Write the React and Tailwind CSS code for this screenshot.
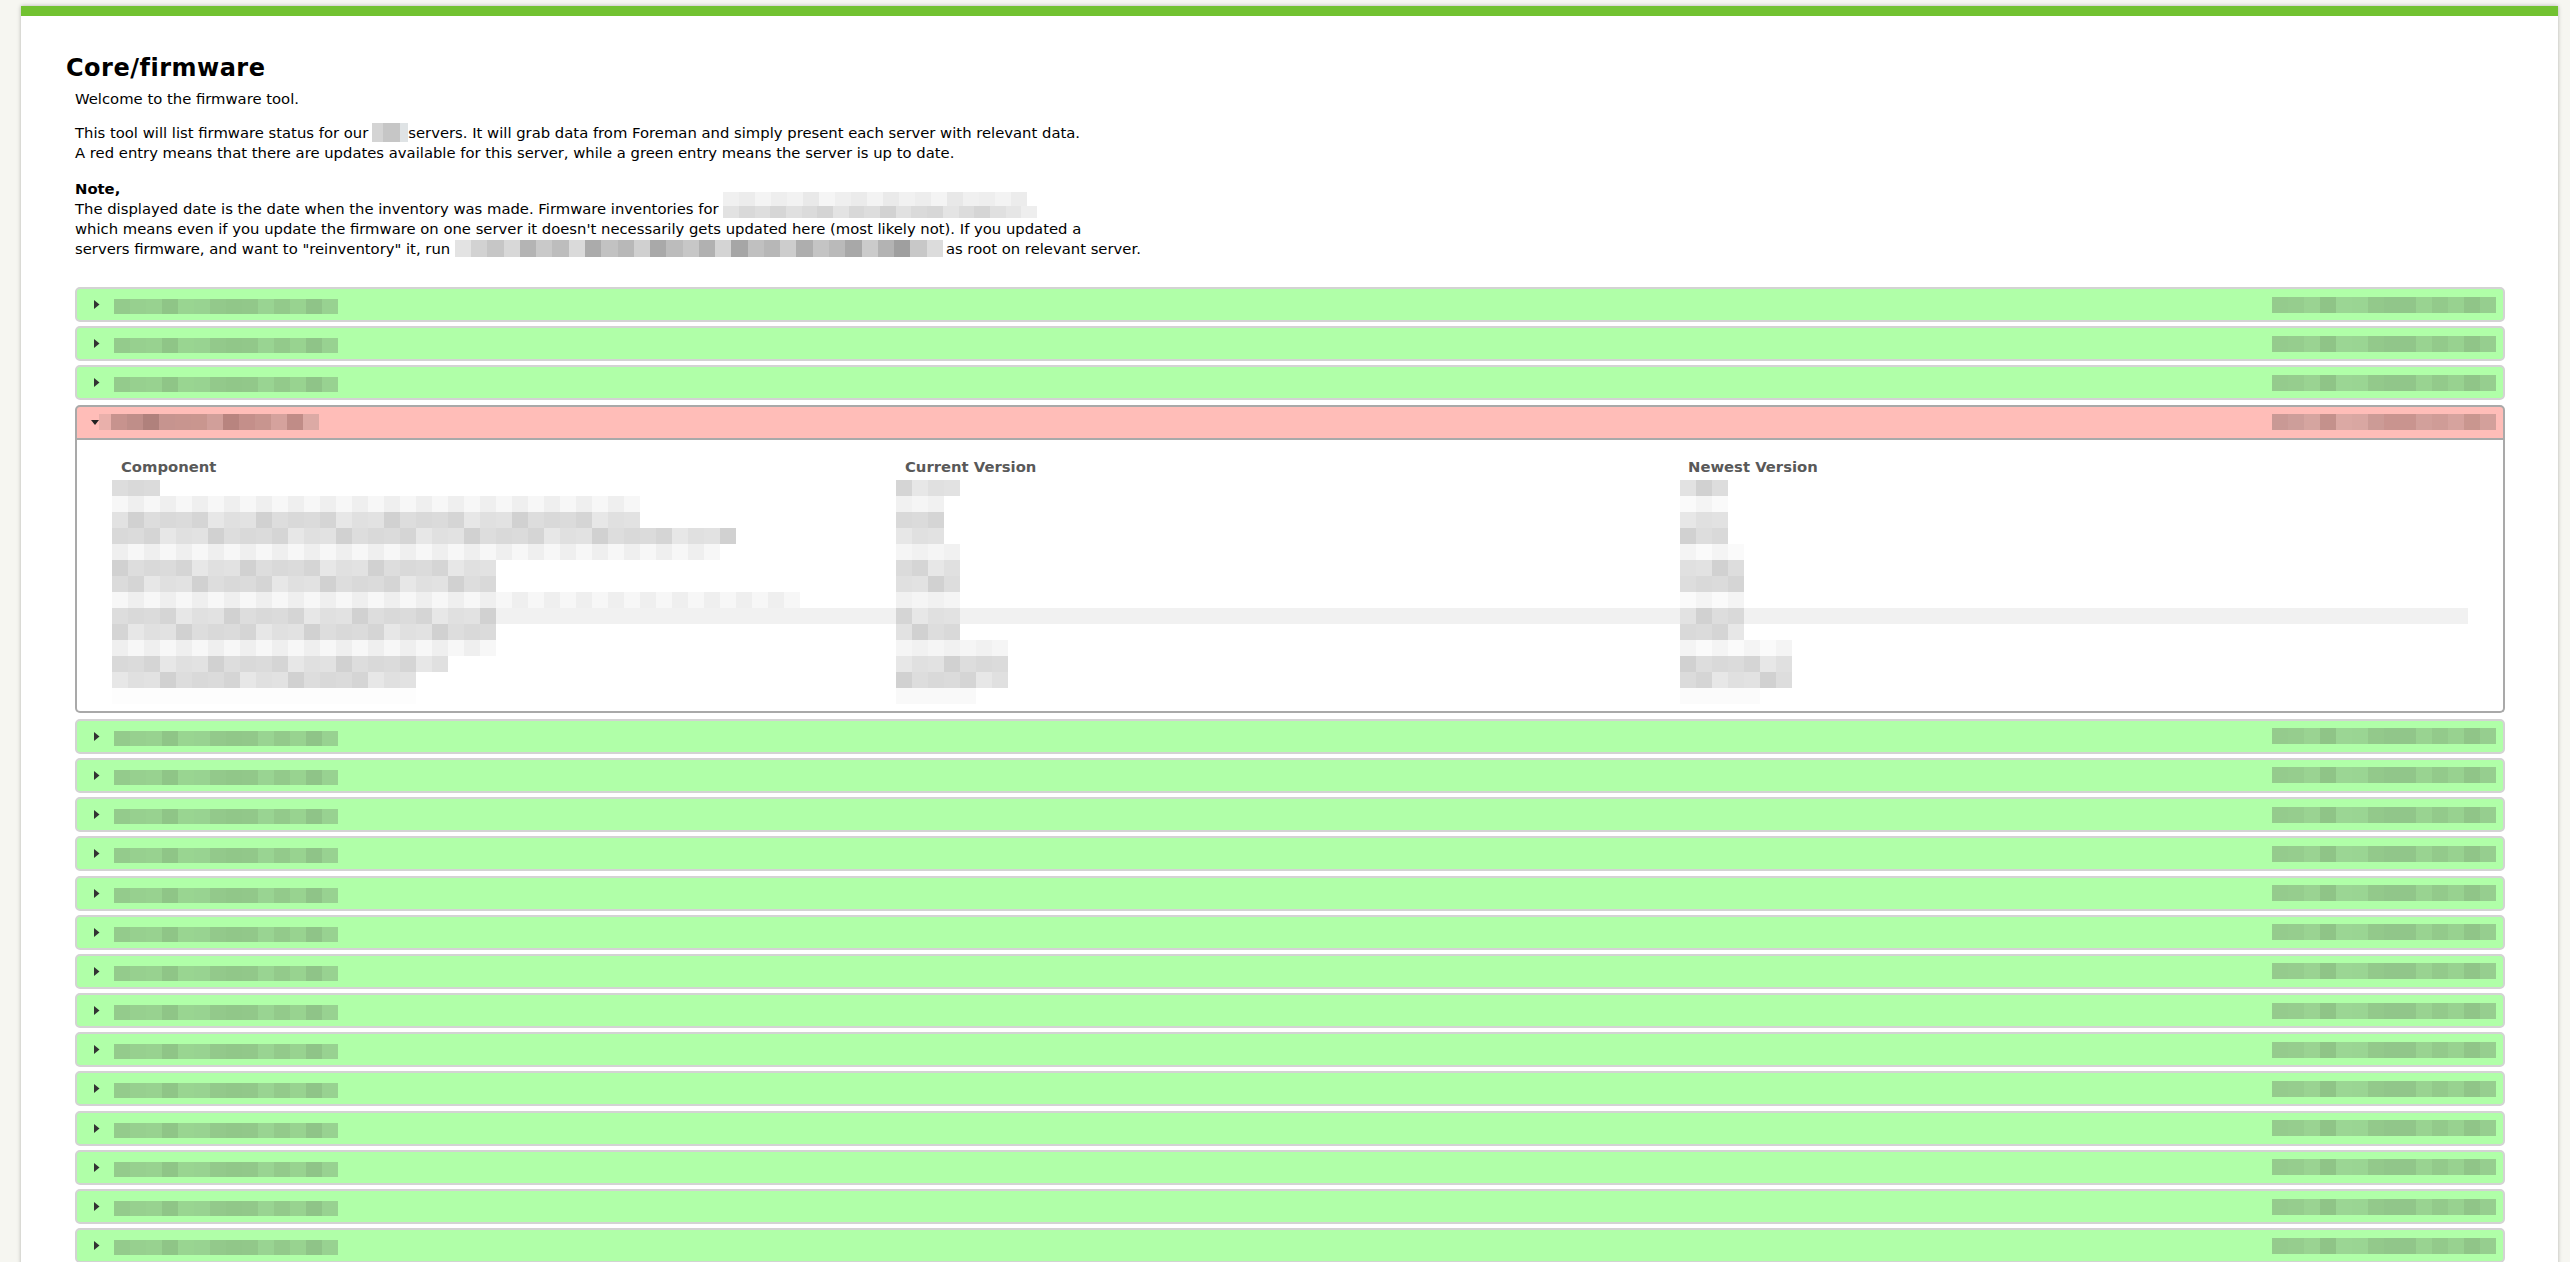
import React from 'react';

// pixelated (blurred) name / date placeholders, same for every server row
const greenName = ['bg-[#94cb8c]', 'bg-[#97d08f]', 'bg-[#98d290]', 'bg-[#8fc587]', 'bg-[#99d591]', 'bg-[#98d391]', 'bg-[#93c98b]', 'bg-[#91c789]', 'bg-[#92c88a]', 'bg-[#99d492]', 'bg-[#93ca8b]', 'bg-[#98d390]', 'bg-[#8fc488]', 'bg-[#98d291]'];
const greenDate = ['bg-[#95cb8d]', 'bg-[#96cd8e]', 'bg-[#9ad392]', 'bg-[#8fc487]', 'bg-[#9bd694]', 'bg-[#9ad593]', 'bg-[#93c98b]', 'bg-[#91c68a]', 'bg-[#91c68a]', 'bg-[#99d391]', 'bg-[#93ca8b]', 'bg-[#98d290]', 'bg-[#90c588]', 'bg-[#96ce8f]'];
const redName = ['bg-[#c7938e]', 'bg-[#bf8e89]', 'bg-[#b0817c]', 'bg-[#c6948f]', 'bg-[#c8958f]', 'bg-[#c9968f]', 'bg-[#d19f9a]', 'bg-[#b8847f]', 'bg-[#c48f8a]', 'bg-[#c8958f]', 'bg-[#d5a29d]', 'bg-[#c08c87]', 'bg-[#dcaaa5]'];
const redDate = ['bg-[#c99995]', 'bg-[#cd9e9a]', 'bg-[#d5a5a0]', 'bg-[#c4918c]', 'bg-[#dba9a4]', 'bg-[#d9a7a2]', 'bg-[#cc9b96]', 'bg-[#c9948f]', 'bg-[#c9948f]', 'bg-[#d2a09b]', 'bg-[#cf9c97]', 'bg-[#d6a39e]', 'bg-[#c9968f]', 'bg-[#d3a09b]'];

const runBlur = ['bg-[#e3e3e3]', 'bg-[#d2d2d2]', 'bg-[#c6c6c6]', 'bg-[#d8d8d8]', 'bg-[#b4b4b4]', 'bg-[#c9c9c9]', 'bg-[#bdbdbd]', 'bg-[#dadada]', 'bg-[#ababab]', 'bg-[#c2c2c2]', 'bg-[#b8b8b8]', 'bg-[#d0d0d0]', 'bg-[#a9a9a9]', 'bg-[#bcbcbc]', 'bg-[#c7c7c7]', 'bg-[#b1b1b1]', 'bg-[#d4d4d4]', 'bg-[#a6a6a6]', 'bg-[#c0c0c0]', 'bg-[#b7b7b7]', 'bg-[#cdcdcd]', 'bg-[#aeaeae]', 'bg-[#c4c4c4]', 'bg-[#bababa]', 'bg-[#a8a8a8]', 'bg-[#cbcbcb]', 'bg-[#b3b3b3]', 'bg-[#9f9f9f]', 'bg-[#c8c8c8]', 'bg-[#dcdcdc]'];
const invTop = ['bg-[#f0f0f0]', 'bg-[#ececec]', 'bg-[#f4f4f4]', 'bg-[#eeeeee]', 'bg-[#f2f2f2]', 'bg-[#e9e9e9]', 'bg-[#f5f5f5]', 'bg-[#efefef]', 'bg-[#ebebeb]', 'bg-[#f3f3f3]', 'bg-[#eaeaea]', 'bg-[#f1f1f1]', 'bg-[#ededed]', 'bg-[#f4f4f4]', 'bg-[#e8e8e8]', 'bg-[#f0f0f0]', 'bg-[#eeeeee]', 'bg-[#f3f3f3]', 'bg-[#ececec]'];
const invBottom = ['bg-[#e2e2e2]', 'bg-[#d9d9d9]', 'bg-[#dedede]', 'bg-[#d6d6d6]', 'bg-[#e0e0e0]', 'bg-[#dbdbdb]', 'bg-[#d4d4d4]', 'bg-[#e3e3e3]', 'bg-[#d8d8d8]', 'bg-[#dddddd]', 'bg-[#d2d2d2]', 'bg-[#e1e1e1]', 'bg-[#dadada]', 'bg-[#d7d7d7]', 'bg-[#e4e4e4]', 'bg-[#dcdcdc]', 'bg-[#d5d5d5]', 'bg-[#e0e0e0]', 'bg-[#e6e6e6]', 'bg-[#eeeeee]'];

const tones = {
  L: ['bg-[#f4f4f4]', 'bg-[#f7f7f7]', 'bg-[#f1f1f1]', 'bg-[#fafafa]', 'bg-[#efefef]', 'bg-[#f5f5f5]'],
  M: ['bg-[#dddddd]', 'bg-[#d5d5d5]', 'bg-[#e2e2e2]', 'bg-[#d9d9d9]', 'bg-[#e7e7e7]', 'bg-[#d1d1d1]', 'bg-[#dbdbdb]', 'bg-[#e0e0e0]'],
  F: ['bg-[#fbfbfb]', 'bg-[#fdfdfd]', 'bg-[#f9f9f9]'],
};

// component / current / newest blur widths (in 16px blocks) per text line
const lines = [
  { c: [3, 'M'], v: [4, 'M'], n: [3, 'M'] },
  { c: [33, 'L'], v: [3, 'L'], n: [3, 'L'] },
  { c: [33, 'M'], v: [3, 'M'], n: [3, 'M'] },
  { c: [39, 'M'], v: [3, 'M'], n: [3, 'M'] },
  { c: [38, 'L'], v: [4, 'L'], n: [4, 'L'] },
  { c: [24, 'M'], v: [4, 'M'], n: [4, 'M'] },
  { c: [24, 'M'], v: [4, 'M'], n: [4, 'M'] },
  { c: [43, 'L'], v: [4, 'L'], n: [4, 'L'] },
  { c: [24, 'M'], v: [4, 'M'], n: [4, 'M'], hl: true },
  { c: [24, 'M'], v: [4, 'M'], n: [4, 'M'] },
  { c: [24, 'L'], v: [7, 'L'], n: [7, 'L'] },
  { c: [21, 'M'], v: [7, 'M'], n: [7, 'M'] },
  { c: [19, 'M'], v: [7, 'M'], n: [7, 'M'] },
  { c: [19, 'F'], v: [5, 'F'], n: [5, 'F'] },
];

function Blocks({ tones, className = 'h-4', block = 'w-4' }) {
  return (
    <div className={`flex shrink-0 ${className}`}>
      {tones.map((t, i) => (
        <div key={i} className={`${block} shrink-0 ${t}`} />
      ))}
    </div>
  );
}

function Cell({ spec, seed }) {
  const [count, tone] = spec;
  const list = tones[tone];
  const cells = Array.from({ length: count }, (_, i) => list[(i * 3 + seed) % list.length]);
  return <Blocks tones={cells} />;
}

function ArrowRight() {
  return (
    <svg width="6" height="9" viewBox="0 0 6 9" className="shrink-0">
      <polygon points="0,0 5.5,4.5 0,9" fill="#333" />
    </svg>
  );
}

function ArrowDown() {
  return (
    <svg width="8" height="5" viewBox="0 0 8 5" className="shrink-0">
      <polygon points="0,0 8,0 4,5" fill="#222" />
    </svg>
  );
}

function ServerRow() {
  return (
    <div className="h-[35px] flex items-center bg-[#b0ffa8] border-2 border-[#d3d3d3] rounded-[5px] pl-[17px] pr-[7px]">
      <ArrowRight />
      <Blocks tones={greenName} className="h-[15px] ml-[14px] mt-[4px]" />
      <Blocks tones={greenDate} className="h-[16px] ml-auto" />
    </div>
  );
}

function OpenServer() {
  return (
    <div className="flex flex-col mb-[2px]">
      <div className="h-[35px] flex items-center bg-[#ffbdb8] border-2 border-[#a9a9a9] rounded-t-[5px] pl-[14px] pr-[7px]">
        <ArrowDown />
        <div className="w-[12px] h-[16px] bg-[#e9b0ab]" />
        <Blocks tones={redName} className="h-[16px]" />
        <Blocks tones={redDate} className="h-[16px] ml-auto" />
      </div>
      <div className="bg-white border-x-2 border-b-2 border-[#a9a9a9] rounded-b-[5px] px-[35px] pt-[17px] pb-[7px]">
        <div className="grid grid-cols-[784px_784px_1fr] leading-[20px] font-bold text-[#595959] mb-[3px]">
          <div className="pl-[9px]">Component</div>
          <div className="pl-[9px]">Current Version</div>
          <div className="pl-[8px]">Newest Version</div>
        </div>
        {lines.map((l, i) => (
          <div key={i} className={`grid grid-cols-[784px_784px_1fr] h-4 ${l.hl ? 'bg-[#f1f1f1]' : ''}`}>
            <Cell spec={l.c} seed={i} />
            <Cell spec={l.v} seed={i + 1} />
            <Cell spec={l.n} seed={i + 2} />
          </div>
        ))}
      </div>
    </div>
  );
}

export default function App() {
  return (
    <div className="min-h-screen bg-[#f6f6f1] pt-[6px] pl-[21px] pr-[12px] font-['DejaVu_Sans','Verdana',sans-serif] text-black">
      <div className="bg-white border-t-[10px] border-[#72c231] shadow-[0_0_4px_rgba(0,0,0,0.28)] pt-[38px] pl-[45px] pr-[53px] pb-[40px]">
        <h1 className="text-[24px] leading-[28px] font-bold tracking-[0.5px]">Core/firmware</h1>

        <div className="pl-[9px] text-[14.8px] leading-[20px]">
          <p className="mt-[7px]">Welcome to the firmware tool.</p>

          <p className="mt-[14px]">
            This tool will list firmware status for our
            <span className="inline-flex align-top h-[19px] ml-[4px]">
              <span className="w-[11px] bg-[#d4d4d4]" />
              <span className="w-[17px] bg-[#c6c6c6]" />
              <span className="w-[8px] bg-[#dfe3e5]" />
            </span>
            servers. It will grab data from Foreman and simply present each server with relevant data.
            <br />
            A red entry means that there are updates available for this server, while a green entry means the server is up to date.
          </p>

          <p className="mt-[16px]">
            <b>Note,</b>
            <br />
            The displayed date is the date when the inventory was made. Firmware inventories for{' '}
            <span className="relative inline-block align-top w-[314px] h-[20px]">
              <span className="absolute left-0 top-[-7px] flex flex-col">
                <Blocks tones={invTop} className="h-[14px]" />
                <Blocks tones={invBottom} className="h-[12px]" block="w-[15.7px]" />
              </span>
            </span>
            <br />
            which means even if you update the firmware on one server it doesn't necessarily gets updated here (most likely not). If you updated a
            <br />
            servers firmware, and want to "reinventory" it, run{' '}
            <span className="inline-flex align-top mt-[1px] h-[17px] w-[488px] mr-[3px]">
              {runBlur.map((t, i) => (
                <span key={i} className={`flex-1 ${t}`} />
              ))}
            </span>
            as root on relevant server.
          </p>

          <div className="mt-[28px] flex flex-col gap-[4.2px]">
            <ServerRow />
            <ServerRow />
            <ServerRow />
            <OpenServer />
            {Array.from({ length: 16 }, (_, i) => (
              <ServerRow key={i} />
            ))}
          </div>
        </div>
      </div>
    </div>
  );
}
